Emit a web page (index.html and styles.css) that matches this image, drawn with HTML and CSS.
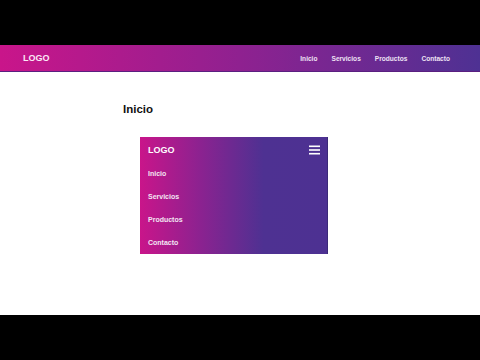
FILE: index.html
```html
<!DOCTYPE html>
<html lang="es">
<head>
<meta charset="utf-8">
<title>Menu</title>
<link rel="stylesheet" href="styles.css">
</head>
<body>
<div class="bar"></div>
<div class="screen">
  <header class="topnav">
    <div class="logo">LOGO</div>
    <nav class="links">
      <a href="#">Inicio</a>
      <a href="#">Servicios</a>
      <a href="#">Productos</a>
      <a href="#">Contacto</a>
    </nav>
  </header>
  <main class="content">
    <h1 class="title">Inicio</h1>
    <div class="card">
      <div class="card-head">
        <div class="card-logo">LOGO</div>
        <svg class="burger" width="11" height="10" viewBox="0 0 11 10">
          <rect x="0" y="0.5" width="11" height="1.6" fill="#fff"/>
          <rect x="0" y="4.2" width="11" height="1.6" fill="#fff"/>
          <rect x="0" y="7.9" width="11" height="1.6" fill="#fff"/>
        </svg>
      </div>
      <ul class="menu">
        <li>Inicio</li>
        <li>Servicios</li>
        <li>Productos</li>
        <li>Contacto</li>
      </ul>
    </div>
  </main>
</div>
<div class="bar"></div>
</body>
</html>
```
FILE: styles.css
```css
html, body {
  margin: 0;
  padding: 0;
  background: #000;
  font-family: "Liberation Sans", Arial, sans-serif;
}
.bar {
  height: 45px;
  background: #000;
}
.screen {
  height: 270px;
  background: #fff;
  display: flex;
  flex-direction: column;
}
.topnav {
  height: 27px;
  box-sizing: border-box;
  border-bottom: 1px solid #5a1f80;
  background: linear-gradient(90deg, #c9158a 0%, #8f2190 50%, #4e3193 100%);
  display: flex;
  align-items: center;
  justify-content: space-between;
  padding: 0 30px 0 23px;
}
.logo {
  color: #fbeaf6;
  font-weight: bold;
  font-size: 9px;
}
.links {
  display: flex;
  gap: 14px;
}
.links a {
  color: #eee2f4;
  text-decoration: none;
  font-weight: bold;
  font-size: 6.6px;
}
.content {
  padding: 30px 0 0 123px;
}
.title {
  margin: 0;
  font-size: 11.5px;
  line-height: 14px;
  font-weight: bold;
  color: #111;
}
.card {
  margin: 21px 0 0 17px;
  width: 187px;
  background: linear-gradient(90deg, #c9158a 0%, #8c2290 32%, #4e3192 66%, #4d3192 100%);
  border-right: 1px solid #3b2a78;
}
.card-head {
  height: 25px;
  display: flex;
  align-items: center;
  justify-content: space-between;
  padding: 0 7px 0 8px;
}
.card-logo {
  color: #fff;
  font-weight: bold;
  font-size: 9px;
}
.burger {
  display: block;
}
.menu {
  list-style: none;
  margin: 0;
  padding: 0;
}
.menu li {
  height: 23px;
  line-height: 23px;
  padding-left: 8px;
  color: #f3e6f3;
  font-weight: bold;
  font-size: 7px;
}
```
